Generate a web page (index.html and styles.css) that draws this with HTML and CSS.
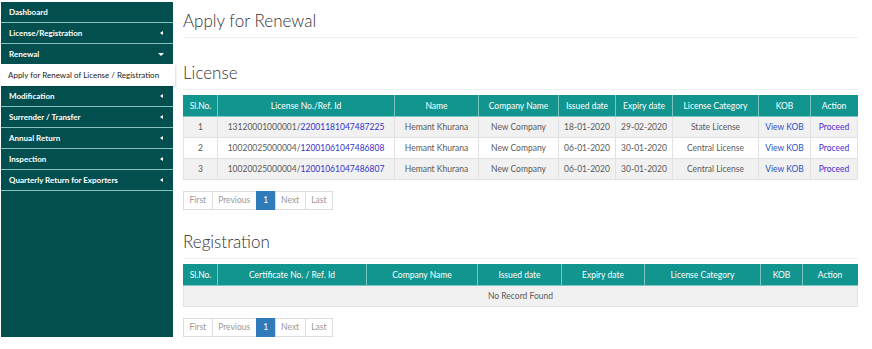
FILE: index.html
```html
<!DOCTYPE html>
<html lang="en">
<head>
    <meta charset="UTF-8">
    <meta name="viewport" content="width=device-width, initial-scale=1.0">
    <title>Apply for Renewal</title>
    <link rel="stylesheet" href="styles.css">
</head>
<body>
    <div class="layout">
        <nav class="sidebar">
            <ul class="menu">
                <li class="menu-item">Dashboard</li>
                <li class="menu-item has-sub">License/Registration</li>
                <li class="menu-item has-sub open">Renewal</li>
                <li class="sub-item">Apply for Renewal of License / Registration</li>
                <li class="menu-item has-sub">Modification</li>
                <li class="menu-item has-sub">Surrender / Transfer</li>
                <li class="menu-item has-sub">Annual Return</li>
                <li class="menu-item has-sub">Inspection</li>
                <li class="menu-item has-sub">Quarterly Return for Exporters</li>
            </ul>
        </nav>

        <main class="content">
            <h2 class="page-title">Apply for Renewal</h2>

            <h3 class="section-title">License</h3>
            <table class="grid">
                <thead>
                    <tr>
                        <th class="w-34">Sl.No.</th>
                        <th class="w-177">License No./Ref. Id</th>
                        <th class="w-84">Name</th>
                        <th class="w-80">Company Name</th>
                        <th class="w-57">Issued date</th>
                        <th class="w-57">Expiry date</th>
                        <th class="w-86">License Category</th>
                        <th class="w-52">KOB</th>
                        <th class="w-47">Action</th>
                    </tr>
                </thead>
                <tbody>
                    <tr>
                        <td>1</td>
                        <td>13120001000001/<a href="#" class="ref">22001181047487225</a></td>
                        <td>Hemant Khurana</td>
                        <td>New Company</td>
                        <td>18-01-2020</td>
                        <td>29-02-2020</td>
                        <td>State License</td>
                        <td><a href="#" class="kob">View KOB</a></td>
                        <td><a href="#" class="proceed">Proceed</a></td>
                    </tr>
                    <tr>
                        <td>2</td>
                        <td>10020025000004/<a href="#" class="ref">12001061047486808</a></td>
                        <td>Hemant Khurana</td>
                        <td>New Company</td>
                        <td>06-01-2020</td>
                        <td>30-01-2020</td>
                        <td>Central License</td>
                        <td><a href="#" class="kob">View KOB</a></td>
                        <td><a href="#" class="proceed">Proceed</a></td>
                    </tr>
                    <tr>
                        <td>3</td>
                        <td>10020025000004/<a href="#" class="ref">12001061047486807</a></td>
                        <td>Hemant Khurana</td>
                        <td>New Company</td>
                        <td>06-01-2020</td>
                        <td>30-01-2020</td>
                        <td>Central License</td>
                        <td><a href="#" class="kob">View KOB</a></td>
                        <td><a href="#" class="proceed">Proceed</a></td>
                    </tr>
                </tbody>
            </table>
            <ul class="pager">
                <li>First</li>
                <li>Previous</li>
                <li class="active">1</li>
                <li>Next</li>
                <li>Last</li>
            </ul>

            <h3 class="section-title">Registration</h3>
            <table class="grid">
                <thead>
                    <tr>
                        <th class="w-34">Sl.No.</th>
                        <th class="w-149">Certificate No. / Ref. Id</th>
                        <th class="w-111">Company Name</th>
                        <th class="w-84">Issued date</th>
                        <th class="w-83">Expiry date</th>
                        <th class="w-116">License Category</th>
                        <th class="w-42">KOB</th>
                        <th class="w-55">Action</th>
                    </tr>
                </thead>
                <tbody>
                    <tr>
                        <td colspan="8">No Record Found</td>
                    </tr>
                </tbody>
            </table>
            <ul class="pager">
                <li>First</li>
                <li>Previous</li>
                <li class="active">1</li>
                <li>Next</li>
                <li>Last</li>
            </ul>
        </main>
    </div>
</body>
</html>
```

FILE: styles.css
```css
body {
    margin: 0;
    padding: 0;
    background-color: #fff;
    font-family: Lato, "Open Sans", sans-serif;
    color: #555;
}

.layout {
    display: flex;
    align-items: flex-start;
}

/* sidebar */
.sidebar {
    width: 172px;
    height: 335px;
    margin: 2px 0 0 1px;
    background-color: #034f4f;
    flex-shrink: 0;
}

.menu {
    list-style: none;
    margin: 0;
    padding: 0;
}

.menu-item {
    height: 20px;
    line-height: 20px;
    padding: 0 8px;
    border-bottom: 1px solid #86c3bd;
    color: #fff;
    font-size: 8px;
    font-weight: 700;
    display: flex;
    justify-content: space-between;
    align-items: center;
}

.menu-item.has-sub::after {
    content: "";
    width: 0;
    height: 0;
    margin-right: 2px;
    border-top: 2.5px solid transparent;
    border-bottom: 2.5px solid transparent;
    border-right: 3px solid #fff;
}

.menu-item.open {
    border-bottom: none;
}

.menu-item.open::after {
    border-top: 3px solid #fff;
    border-left: 3px solid transparent;
    border-right: 3px solid transparent;
    border-bottom: none;
    margin-right: 1px;
}

.sub-item {
    height: 22px;
    line-height: 22px;
    padding: 0 7px;
    background-color: #fff;
    color: #222;
    font-size: 8px;
    width: 160px;
    white-space: nowrap;
    box-shadow: 1px 1px 2px rgba(0, 0, 0, 0.15);
}

/* content */
.content {
    flex: 1;
    padding: 0 15px 0 10px;
}

.page-title,
.section-title {
    margin: 0;
    font-size: 17px;
    font-weight: 300;
    line-height: 22px;
    color: #333;
    padding-bottom: 5px;
    border-bottom: 1px solid #eceeee;
}

.page-title {
    padding-top: 10px;
}

.section-title {
    margin-top: 24px;
}

.pager + .section-title {
    margin-top: 21px;
}

.grid {
    width: 674px;
    margin-top: 5px;
    border-collapse: collapse;
    table-layout: fixed;
    font-size: 8.5px;
    text-align: center;
}

.grid th {
    box-sizing: border-box;
    height: 21px;
    padding: 0 2px;
    background-color: #12958f;
    color: #fff;
    font-weight: 400;
    border: 1px solid #7cc6c1;
    border-top-color: #12958f;
}

.grid th:first-child {
    border-left-color: #12958f;
}

.grid th:last-child {
    border-right-color: #12958f;
}

.grid td {
    height: 20px;
    padding: 0 2px;
    border: 1px solid #e2e2e2;
    color: #5a5a5a;
}

.grid tbody tr:nth-child(odd) td {
    background-color: #f1f1f1;
}

.grid a {
    text-decoration: none;
}

.ref { color: #3434c9; }
.kob { color: #2a4fcc; }
.proceed { color: #4a2ccc; }

.w-34 { width: 34px; }
.w-42 { width: 42px; }
.w-47 { width: 47px; }
.w-52 { width: 52px; }
.w-55 { width: 55px; }
.w-57 { width: 57px; }
.w-80 { width: 80px; }
.w-83 { width: 83px; }
.w-84 { width: 84px; }
.w-86 { width: 86px; }
.w-111 { width: 111px; }
.w-116 { width: 116px; }
.w-149 { width: 149px; }
.w-177 { width: 177px; }

/* pager */
.pager {
    list-style: none;
    margin: 11px 0 0 0;
    padding: 0;
    display: flex;
    font-size: 8.5px;
}

.pager li {
    height: 17px;
    line-height: 17px;
    padding: 0 5.5px;
    border: 1px solid #dedede;
    margin-left: -1px;
    color: #999;
}

.pager li:first-child {
    margin-left: 0;
}

.pager li.active {
    padding: 0 6.5px;
    background-color: #2f7ab8;
    border-color: #2f7ab8;
    color: #fff;
}
```
